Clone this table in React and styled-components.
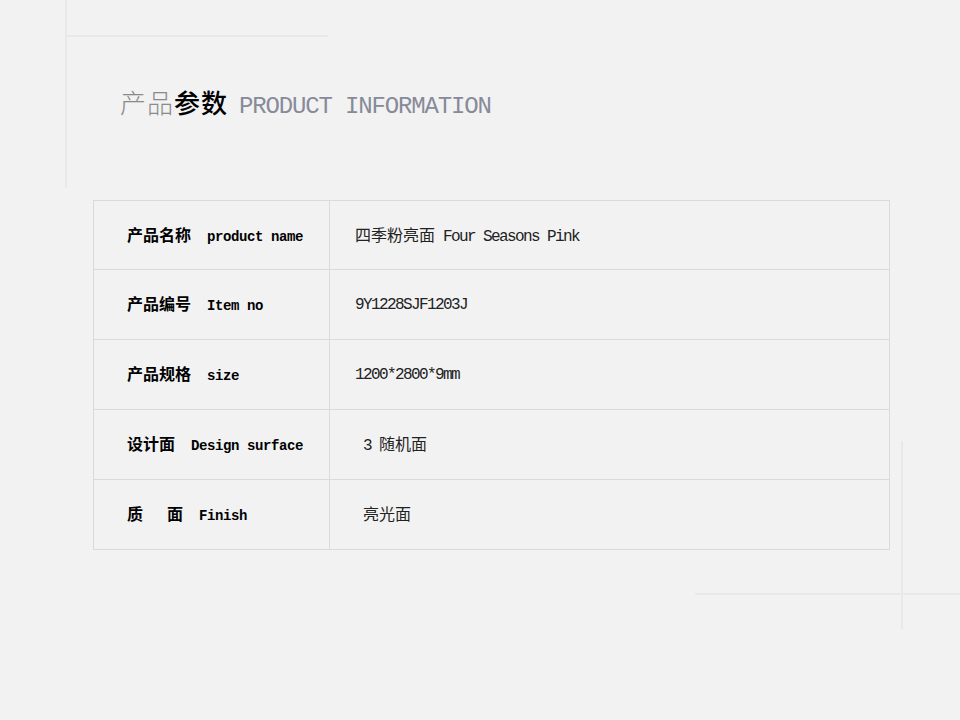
import React from 'react'
import styled, { createGlobalStyle } from 'styled-components'

const GlobalStyle = createGlobalStyle`
  body {
    margin: 0;
    background: #f2f2f2;
    font-family: "Liberation Mono", "Noto Sans CJK SC", monospace;
  }
`

const Page = styled.div`
  position: relative;
  width: 960px;
  height: 720px;
  box-sizing: border-box;
  padding: 87px 0 0 93px;
  background: #f2f2f2;
  overflow: hidden;
`

// faint corner strokes framing the page
const Stroke = styled.span`
  position: absolute;
  background: #e9e9e9;
  left: ${p => p.x}px;
  top: ${p => p.y}px;
  width: ${p => (p.vertical ? 2 : p.len)}px;
  height: ${p => (p.vertical ? p.len : 2)}px;
`

const Title = styled.h1`
  margin: 0 0 0 27px;
  height: 30px;
  line-height: 30px;
  font-weight: normal;
  white-space: pre;
`

const TitleCn = styled.span`
  font-family: "Noto Sans CJK SC", sans-serif;
  font-size: 26px;
  letter-spacing: 1px;
  color: ${p => (p.strong ? '#000' : '#8a8a8a')};
  font-weight: ${p => (p.strong ? 500 : 300)};
`

const TitleEn = styled.span`
  font-family: "Liberation Mono", monospace;
  font-size: 24px;
  letter-spacing: -1.15px;
  color: #878a99;
  margin-left: 11px;
`

const Sheet = styled.div`
  margin-top: 83px;
  width: 797px;
  box-sizing: border-box;
  display: grid;
  grid-template-columns: 236px 1fr;
  border-top: 1px solid #dadada;
  border-left: 1px solid #dadada;
`

const Cell = styled.div`
  height: 70px;
  box-sizing: border-box;
  border-right: 1px solid #dadada;
  border-bottom: 1px solid #dadada;
  display: flex;
  align-items: center;
  padding-left: ${p => (p.label ? 33 : 25)}px;
  color: ${p => (p.label ? '#000' : '#222')};
  font-weight: ${p => (p.label ? 700 : 400)};

  &:nth-child(-n + 2) {
    height: 69px;
  }
`

const Line = styled.span`
  line-height: 20px;
  white-space: pre;
`

const Cn = styled.span`
  font-family: "Noto Sans CJK SC", sans-serif;
  font-size: 16px;
`

const Blank = styled.span`
  display: inline-block;
  width: ${p => p.w}px;
`

const En = styled.span`
  font-family: "Liberation Mono", monospace;
  font-size: ${p => (p.bold ? 14 : 16)}px;
  letter-spacing: ${p => (p.bold ? -0.4 : -1.6)}px;
`

const rows = [
  {
    cn: '产品名称',
    en: 'product name',
    value: <><Cn>四季粉亮面</Cn><Blank w={8} /><En>Four Seasons Pink</En></>
  },
  {
    cn: '产品编号',
    en: 'Item no',
    value: <En>9Y1228SJF1203J</En>
  },
  {
    cn: '产品规格',
    en: 'size',
    value: <En>1200*2800*9mm</En>
  },
  {
    cn: '设计面',
    en: 'Design surface',
    value: <><Blank w={8} /><En>3</En><Blank w={8} /><Cn>随机面</Cn></>
  },
  {
    cn: <>质<Blank w={24} />面</>,
    en: 'Finish',
    value: <><Blank w={8} /><Cn>亮光面</Cn></>
  }
]

export default function App() {
  return (
    <Page>
      <GlobalStyle />
      <Stroke vertical x={65} y={0} len={188} />
      <Stroke x={65} y={35} len={263} />
      <Stroke vertical x={901} y={441} len={188} />
      <Stroke x={695} y={593} len={265} />

      <Title>
        <TitleCn>产品</TitleCn>
        <TitleCn strong>参数</TitleCn>
        <TitleEn>PRODUCT INFORMATION</TitleEn>
      </Title>

      <Sheet>
        {rows.map((row, i) => (
          <React.Fragment key={i}>
            <Cell label>
              <Line>
                <Cn>{row.cn}</Cn>
                <Blank w={16} />
                <En bold>{row.en}</En>
              </Line>
            </Cell>
            <Cell>
              <Line>{row.value}</Line>
            </Cell>
          </React.Fragment>
        ))}
      </Sheet>
    </Page>
  )
}
